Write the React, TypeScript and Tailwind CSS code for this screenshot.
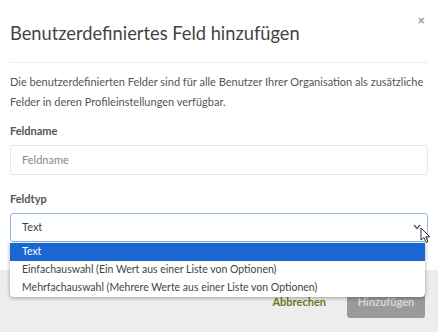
export default function App() {
  return (
    <div className="relative w-[438px] h-[332px] overflow-hidden bg-white font-['Lato',sans-serif] text-[#444]">
      {/* Header */}
      <div className="relative px-[10px] pt-[20px]">
        <h1 className="text-[18.3px] leading-[26px] text-[#444]">Benutzerdefiniertes Feld hinzufügen</h1>
        <button className="absolute right-[13px] top-[14px] text-[13px] leading-none font-bold text-[#999]">×</button>
        <div className="mt-[16px] h-px bg-[#eeeeee]" />
      </div>

      {/* Body */}
      <div className="px-[10px] pt-[9px]">
        <p className="text-[11px] leading-[20px] text-[#555]">
          Die benutzerdefinierten Felder sind für alle Benutzer Ihrer Organisation als zusätzliche Felder in deren Profileinstellungen verfügbar.
        </p>

        <label className="mt-[13px] block text-[11px] leading-[12px] font-bold text-[#555]">Feldname</label>
        <div className="mt-[8px] h-[30px] rounded-[3px] border border-[#e6e6e6] px-[11px] flex items-center text-[11px] text-[#888]">
          Feldname
        </div>

        <label className="mt-[18px] block text-[11px] leading-[12px] font-bold text-[#555]">Feldtyp</label>
        <div className="relative mt-[8px] h-[29px] rounded-[3px] border border-[#8fb5e0] px-[11px] flex items-center text-[11px] text-[#444]">
          Text
          <svg className="absolute right-[6px] top-[10px]" width="8" height="6" viewBox="0 0 8 6">
            <path d="M1 1 L4 4.5 L7 1" stroke="#555" strokeWidth="1.3" fill="none" />
          </svg>
          {/* mouse pointer */}
          <svg className="absolute right-[-4px] top-[13px]" width="11" height="17" viewBox="0 0 11 17">
            <path d="M1 1 L1 13 L4 10.5 L6.2 15.5 L8 14.7 L5.9 9.8 L9.8 9.8 Z" fill="#fff" stroke="#333" strokeWidth="1" strokeLinejoin="round" />
          </svg>
        </div>
      </div>

      {/* Footer */}
      <div className="absolute left-0 right-0 bottom-0 h-[62px] bg-[#ededed] flex items-center justify-end gap-[21px] pr-[13px] pt-[3px]">
        <span className="text-[11px] font-bold text-[#6b7a1c]">Abbrechen</span>
        <button className="h-[31px] w-[78px] rounded-[3px] bg-[#9a9a9a] text-[11px] font-bold text-[#d9d9d9]">Hinzufügen</button>
      </div>

      {/* Open select list */}
      <div className="absolute left-[10px] top-[243px] w-[415px] rounded-b-[4px] bg-white shadow-[0_1px_4px_rgba(0,0,0,0.35)] overflow-hidden text-[10.5px]">
        <div className="h-[18px] bg-[#1967d2] px-[12px] flex items-center text-white">Text</div>
        <div className="h-[18px] px-[12px] flex items-center text-[#444]">Einfachauswahl (Ein Wert aus einer Liste von Optionen)</div>
        <div className="h-[18px] px-[12px] flex items-center text-[#444]">Mehrfachauswahl (Mehrere Werte aus einer Liste von Optionen)</div>
      </div>
    </div>
  );
}
